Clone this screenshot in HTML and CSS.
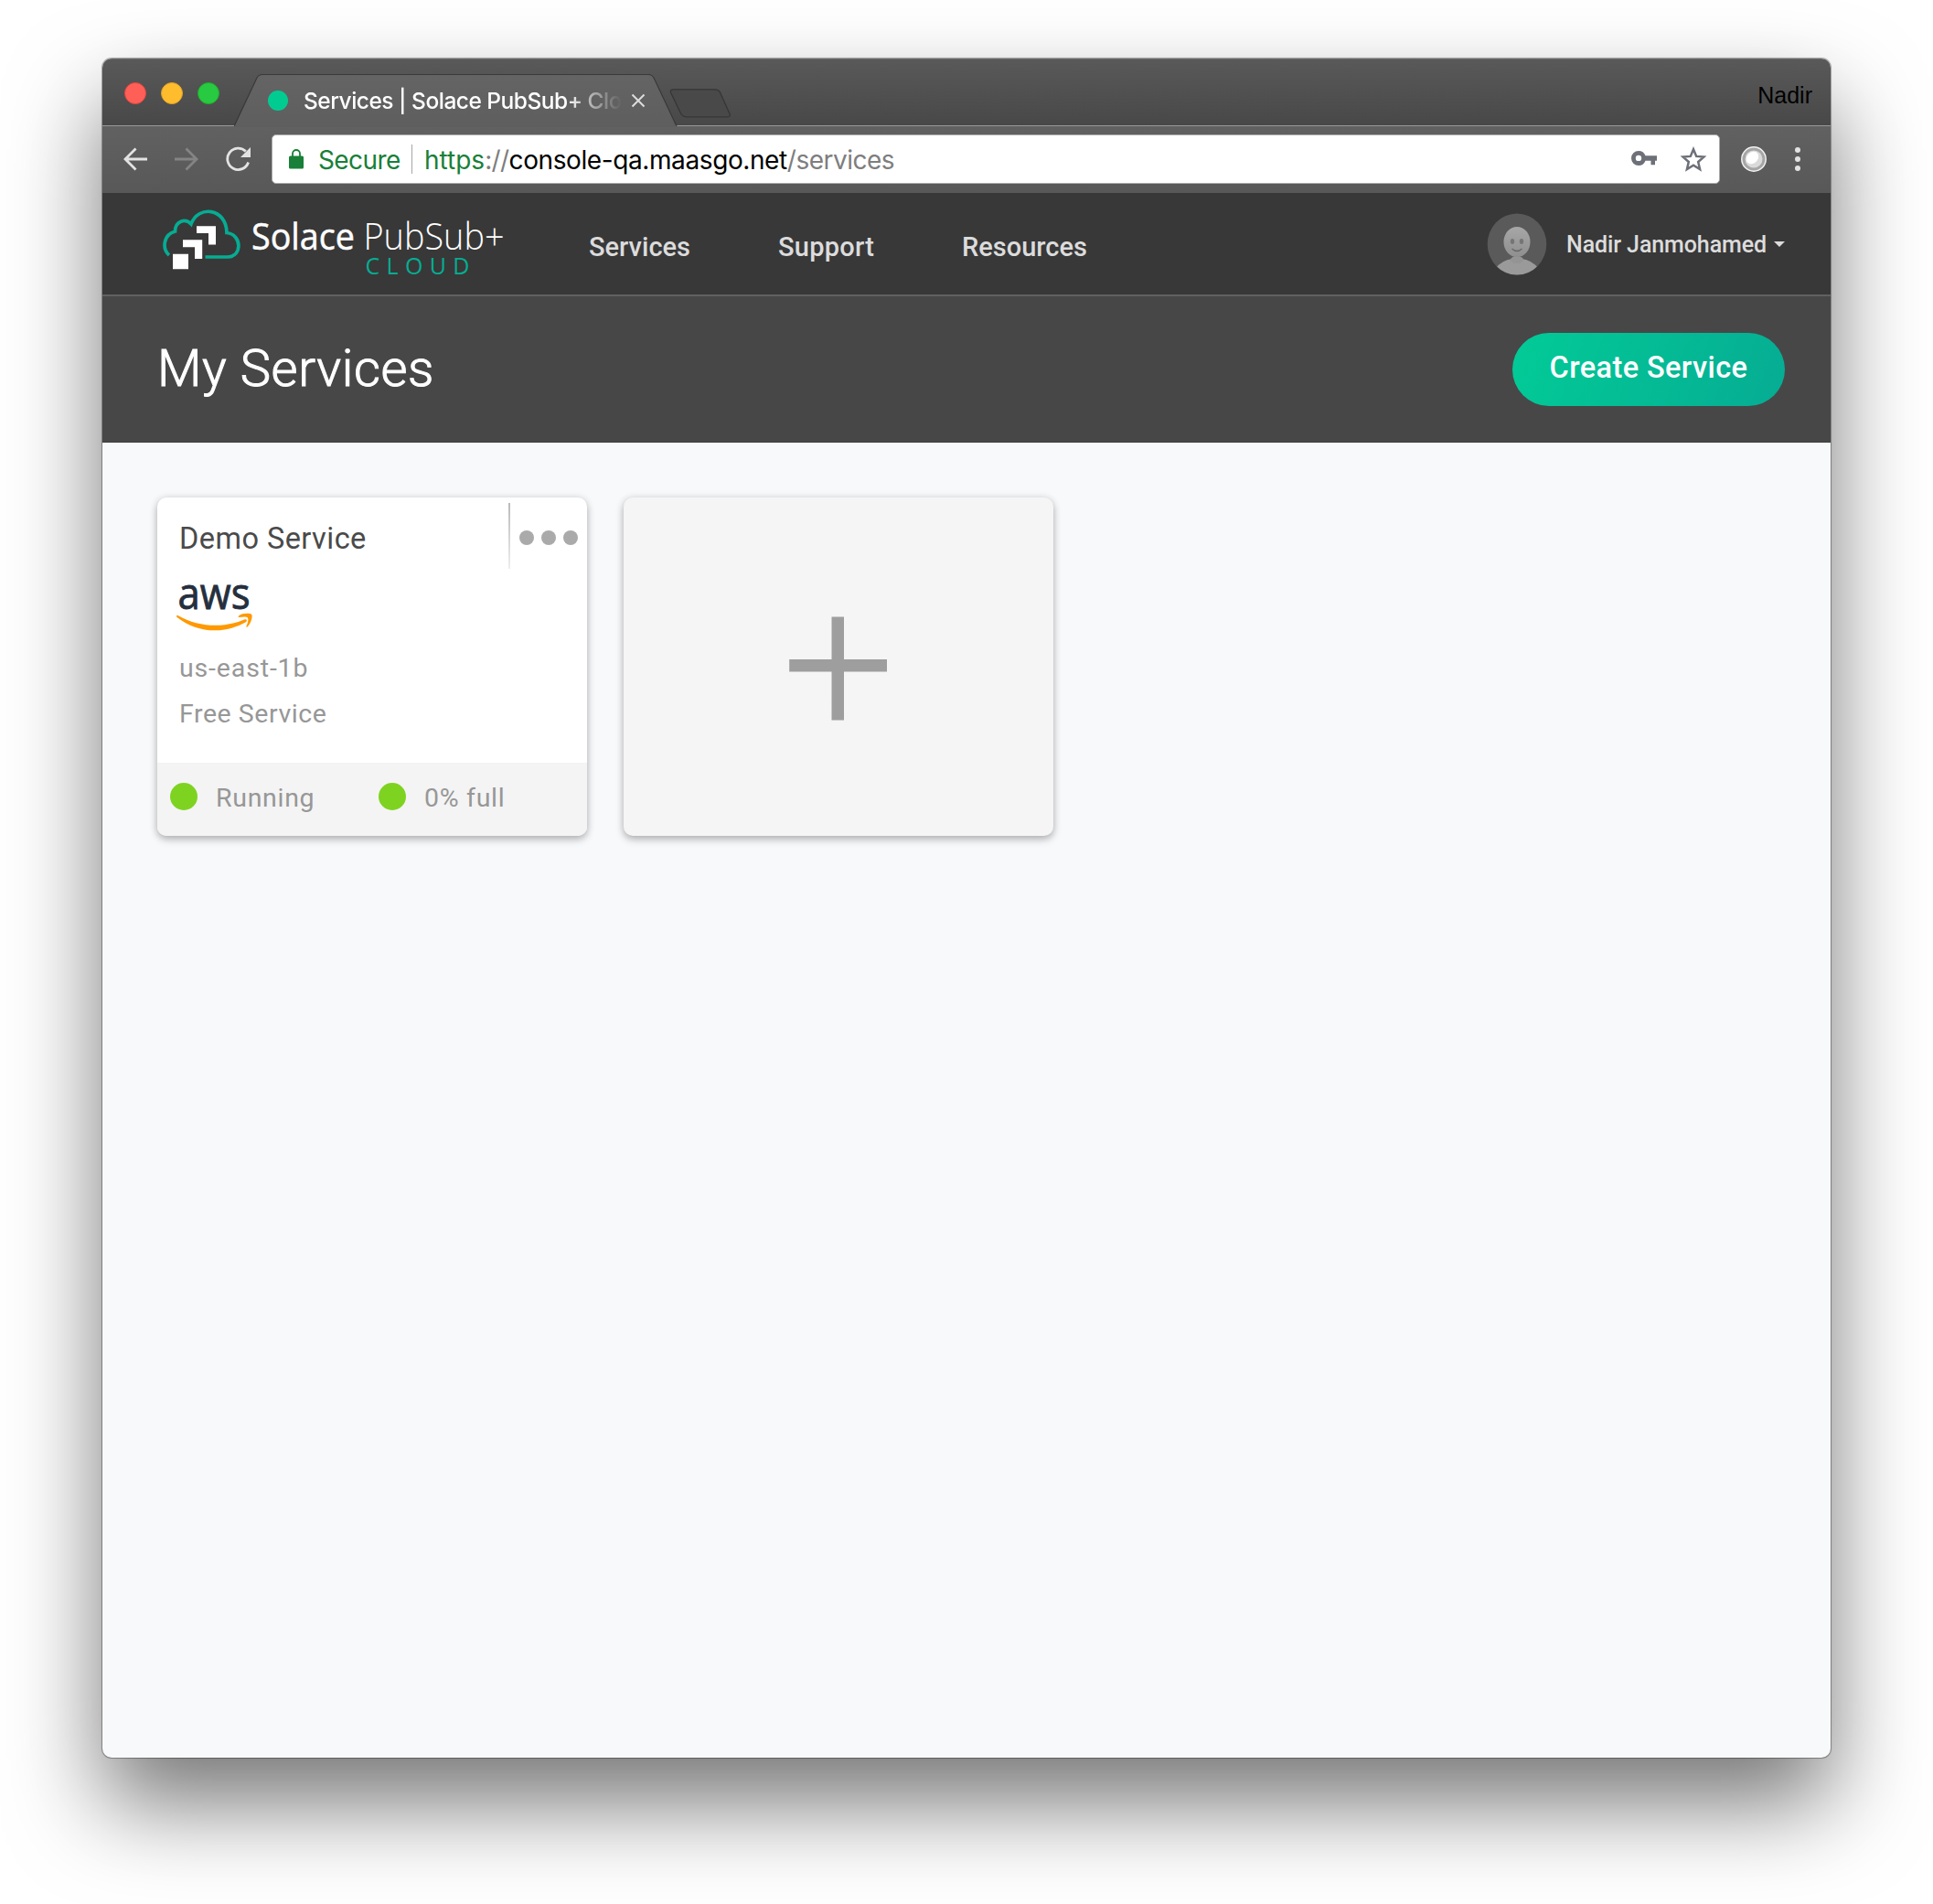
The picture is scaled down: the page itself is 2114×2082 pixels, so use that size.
FILE: index.html
```html
<!DOCTYPE html>
<html lang="en">
<head>
<meta charset="utf-8">
<title>Services | Solace PubSub+ Cloud</title>
<link rel="stylesheet" href="styles.css">
</head>
<body>
<div class="window">
  <div class="tabstrip">
    <div class="lights"><i class="light red"></i><i class="light yellow"></i><i class="light green"></i></div>
    <div class="tab">
      <svg class="tab-shape" width="486" height="58" viewBox="0 0 486 58">
        <path d="M0 58 L25 4 Q27 .5 31 .5 H453 Q457 .5 459 4 L484 58Z" fill="url(#tabfill)"/>
        <path d="M0 57 L25 4 Q27 .5 31 .5 H453 Q457 .5 459 4 L484 57" fill="none" stroke="#393939" stroke-width="1.2"/>
        <defs><linearGradient id="tabfill" x2="0" y2="1"><stop stop-color="#646464"/><stop offset="1" stop-color="#5e5e5e"/></linearGradient></defs>
      </svg>
      <i class="favicon"></i>
      <span class="tab-title">Services | Solace PubSub+ Cloud</span>
      <svg class="tab-close" width="16" height="16" viewBox="0 0 16 16"><path d="M1.500 1.500 L14.500 14.500 M14.500 1.500 L1.500 14.500" stroke="#dcdcdc" stroke-width="2"/></svg>
    </div>
    <svg class="new-tab" width="68" height="32" viewBox="0 0 68 32"><path d="M4.500 .8 H50 Q54 .8 55.500 4 L66 27.500 Q67 30.800 64 30.800 H19 Q14.500 30.800 12.500 27 L1.500 4 Q.6 .8 4.500 .8Z" fill="#494949" stroke="#363636" stroke-width="1.3"/></svg>
    <span class="profile">Nadir</span>
  </div>
  <div class="toolbar">
    <svg class="back" width="26" height="26" viewBox="0 0 26 26"><path d="M13.500 1.500 L2 13 L13.500 24.500 M2 13 H26" fill="none" stroke="#e3e3e3" stroke-width="2.800"/></svg>
    <svg class="forward" width="26" height="26" viewBox="0 0 26 26"><path d="M12.500 1.500 L24 13 L12.500 24.500 M24 13 H0" fill="none" stroke="#848484" stroke-width="2.800"/></svg>
    <svg class="reload" width="28" height="28" viewBox="0 0 28 28"><path d="M21.800 5.600 A11.700 11.700 0 1 0 24.600 17.500" fill="none" stroke="#e3e3e3" stroke-width="2.800"/><path d="M27 1 V12 H16Z" fill="#e3e3e3"/></svg>
    <div class="omnibox">
      <svg class="lock" width="16" height="22" viewBox="0 0 16 22"><rect y="7.500" width="16" height="14" rx="1.500" fill="#188038"/><path d="M4 9 V5 a4 4 0 0 1 8 0 V9" fill="none" stroke="#188038" stroke-width="1.800"/></svg>
      <span class="secure">Secure</span>
      <i class="sep"></i>
      <span class="url"><span class="scheme">https</span><span class="dim colon">://</span><span class="host">console-qa.maasgo.net</span><span class="dim path">/services</span></span>
      <svg class="key" width="28" height="16" viewBox="0 0 28 16"><path fill="#6d7078" fill-rule="evenodd" d="M8 0 a8 8 0 1 0 0 16 a8 8 0 0 0 7.500 -5.200 H21.500 V15.200 H26 V10.800 H28 V5.200 H15.500 A8 8 0 0 0 8 0Z M8 4.700 a3.200 3.200 0 1 1 0 6.400 a3.200 3.200 0 0 1 0 -6.400Z"/></svg>
      <svg class="star" width="30" height="29" viewBox="0 0 30 29"><path d="M15 3.200 L18.200 10.900 L26.400 11.600 L20.200 17 L22.100 25.100 L15 20.800 L7.900 25.100 L9.800 17 L3.600 11.600 L11.800 10.900Z" fill="none" stroke="#6d7078" stroke-width="2.500"/></svg>
    </div>
    <svg class="ext" width="28" height="28" viewBox="0 0 28 28"><circle cx="14" cy="14" r="13.200" fill="#a5a5a5" stroke="#f1f1f1" stroke-width="1.500"/><circle cx="14" cy="14" r="9.500" fill="#dadada"/><ellipse cx="12.500" cy="12.500" rx="7.500" ry="6" transform="rotate(-45 12.500 12.500)" fill="#fff"/></svg>
    <svg class="menu" width="6" height="26" viewBox="0 0 6 26"><g fill="#e3e3e3"><circle cx="3" cy="3" r="3"/><circle cx="3" cy="13" r="3"/><circle cx="3" cy="23" r="3"/></g></svg>
  </div>
  <header class="header">
    <svg class="logo" width="380" height="94" viewBox="0 0 380 94">
      <g fill="none" stroke="#06ac93" stroke-width="3.700"><path d="M8 52 C0 45 1.500 29.500 14.500 26 C14.500 15 25.500 11 32 18 C39.500 -3 70.500 0 71 27.500 C88 29.500 88 54 72 54 H47.500"/></g>
      <path fill="#fff" d="M38 20.200 H59 V40.500 H51 V28 H38Z M23 35.300 H44.200 V56 H36 V43.200 H23Z M12 50.800 H29 V67.200 H12Z"/>
      <text x="98" y="45.500" class="logo-name" textLength="113" lengthAdjust="spacingAndGlyphs">Solace</text>
      <text x="220.500" y="45.500" class="logo-light" textLength="154" lengthAdjust="spacingAndGlyphs">PubSub+</text>
      <text x="222.500" y="72.500" class="logo-cloud" textLength="114">CLOUD</text>
    </svg>
    <nav class="nav"><a>Services</a><a class="support">Support</a><a>Resources</a></nav>
    <div class="account">
      <svg width="66" height="68" viewBox="0 0 66 68"><defs><clipPath id="av"><ellipse cx="33" cy="34" rx="32.300" ry="33.500"/></clipPath><linearGradient id="face" x2="0" y2="1"><stop stop-color="#a7a7a7"/><stop offset="1" stop-color="#8f8f8f"/></linearGradient></defs>
        <g clip-path="url(#av)"><rect width="66" height="68" fill="#5a5a5a"/><ellipse cx="33" cy="73" rx="28" ry="23.500" fill="#9a9a9a"/><ellipse cx="33" cy="51" rx="7" ry="4" fill="#949494"/><ellipse cx="33" cy="31.500" rx="14.500" ry="16.500" fill="url(#face)"/></g>
        <g fill="#757575"><ellipse cx="28" cy="31" rx="2.200" ry="3"/><ellipse cx="38" cy="31" rx="2.200" ry="3"/></g><path d="M27.500 39 Q33 44 38.500 39" fill="none" stroke="#666" stroke-width="1.200"/></svg>
      <span class="account-name">Nadir Janmohamed</span>
      <i class="caret"></i>
    </div>
  </header>
  <div class="titlebar">
    <h1>My Services</h1>
    <button class="create">Create Service</button>
  </div>
  <main class="content">
    <section class="card">
      <div class="card-head"><h2>Demo Service</h2><div class="more"><i></i><i></i><i></i></div></div>
      <div class="card-body">
        <svg class="aws" width="84" height="56" viewBox="0 0 84 56"><text x="1.500" y="29.500" class="aws-text" textLength="79" lengthAdjust="spacingAndGlyphs">aws</text>
          <path fill="#f90" d="M1.500 37 C24 50 52 51 74 41.500 C77 40.500 78 43 75.500 44.500 C51 58 22 56 .6 39 C-.5 37.500 .3 36.300 1.500 37Z"/><path fill="#f90" d="M68 37.500 C72 34 81 34.500 82.300 36 C83.500 38 81.500 46 77.500 49.500 C76.500 50 76 49.500 76.500 48.500 C78 45 79 41.500 78 39.500 C76.500 38 72.500 38.500 68.500 39 C67.500 39 67.300 38.200 68 37.500Z"/></svg>
        <p class="region">us-east-1b</p>
        <p class="plan">Free Service</p>
      </div>
      <div class="card-foot"><div class="status"><i class="dot"></i><span>Running</span></div><div class="status"><i class="dot"></i><span>0% full</span></div></div>
    </section>
    <section class="card add">
      <svg width="108" height="114" viewBox="0 0 108 114"><path fill="#9e9e9e" d="M46.500 .5 h13.500 v46.500 h47 v13.500 h-47 v53 h-13.500 v-53 h-46.300 v-13.500 h46.300z"/></svg>
    </section>
  </main>
</div>
</body>
</html>
```
FILE: styles.css
```css
* { box-sizing: border-box; }
body { margin: 0; background: #fff; height: 2082px; overflow: hidden; padding: 64px 112px 0; }
h1, h2, p { margin: 0; font-weight: 400; }
svg, i { display: block; flex: none; }
.window { width: 1890px; height: 1858px; border-radius: 10px; overflow: hidden; background: #f8f9fb; display: flex; flex-direction: column; font-family: Roboto, sans-serif; white-space: nowrap;
  box-shadow: 0 0 0 1px rgba(0,0,0,.28), 0 0 3px rgba(0,0,0,.12), 0 50px 100px rgba(0,0,0,.54); }

.tabstrip { height: 74px; flex: none; display: flex; align-items: flex-start; background: linear-gradient(#595959, #484848); border-top: 1px solid #6a6a6a; border-bottom: 1px solid #999; font-family: Inter, sans-serif; }
.lights { display: flex; gap: 16px; padding: 25px 0 0 24px; width: 144px; }
.light { width: 24px; height: 24px; border-radius: 50%; border: 1px solid; }
.red { background: #ff5f57; border-color: #e2463f; }
.yellow { background: #ffbd2e; border-color: #e0a028; }
.green { background: #28ca41; border-color: #1dad2b; }
.tab { position: relative; width: 486px; height: 58px; margin-top: 16px; display: flex; align-items: center; padding: 0 0 4px 37px; }
.tab-shape { position: absolute; left: 0; top: 0; }
.favicon { position: relative; width: 22px; height: 22px; border-radius: 50%; background: #00cc92; margin-top: 3px; }
.tab-title { position: relative; width: 348px; margin-left: 17px; margin-top: 3px; overflow: hidden; color: #fff; font-size: 24.500px; font-weight: 500; letter-spacing: -.5px; line-height: 32px; -webkit-mask-image: linear-gradient(90deg, #000 82%, transparent); mask-image: linear-gradient(90deg, #000 82%, transparent); }
.tab-close { position: relative; margin: 3px 0 0 10px; }
.new-tab { margin-top: 32px; margin-left: -10px; }
.profile { margin: 23px 20px 0 auto; font: 25px/32px "Liberation Sans", sans-serif; color: #000; }

.toolbar { height: 73px; flex: none; display: flex; align-items: center; background: linear-gradient(#616161, #585858); padding: 0 33px 2px 23px; }
.forward { margin-left: 30px; }
.reload { margin-left: 30px; }
.omnibox { width: 1584px; height: 54px; margin: 1px 0 0 22px; border-radius: 5px; background: #fff; border: 1px solid #a9a9a9; display: flex; align-items: center; padding: 0 13px 0 18px; font: 28px/40px Inter, sans-serif; }
.secure { margin: 1px 0 0 16px; color: #188038; width: 91px; letter-spacing: -.6px; }
.sep { width: 1px; height: 32px; background: #a5a5a5; margin: 0 13px 0 11px; }
.url { flex: 1; margin-top: 1px; }
.scheme { color: #188038; }
.dim { color: #7e7e7e; }
.colon { letter-spacing: -.6px; }
.host { color: #000; letter-spacing: -.4px; }
.path { letter-spacing: -.5px; }
.key { margin-bottom: 2px; }
.star { margin-left: 25px; }
.ext { margin-left: 23px; }
.menu { margin-left: 31px; }

.header { height: 113px; flex: none; background: #383838; border-bottom: 2px solid #616161; display: flex; align-items: flex-start; padding: 0 50px 0 65px; color: #dcdcdc; }
.logo { margin-top: 16px; }
.logo-name, .logo-light, .logo-cloud { font-family: "Open Sans", sans-serif; font-size: 41px; fill: #fff; }
.logo-name { stroke: #fff; stroke-width: .5; }
.logo-light { font-weight: 300; }
.logo-cloud { font-size: 25px; fill: #06ac93; }
.nav { display: flex; margin: 41px 0 0 87px; font-size: 29px; line-height: 36px; font-weight: 500; }
.nav a { width: 207px; }
.nav a + a { width: 201px; }
.nav .support { letter-spacing: .25px; }
.account { display: flex; align-items: center; margin: 22px 0 0 auto; }
.account-name { margin-left: 21px; font-size: 25px; font-weight: 500; letter-spacing: -.1px; }
.caret { margin-left: 8px; border: 6px solid transparent; border-top-color: #dcdcdc; border-bottom: 0; }

.titlebar { height: 160px; flex: none; background: #474747; border-bottom: 1px solid #3d3d3d; display: flex; align-items: center; justify-content: space-between; padding: 0 50px 0 60px; color: #fff; }
.titlebar h1 { font-size: 56px; font-weight: 300; line-height: 66px; letter-spacing: .65px; -webkit-text-stroke: 1px #fff; padding-bottom: 2px; }
.create { width: 298px; height: 80px; border: 0; border-radius: 40px; background: linear-gradient(110deg, #02cb97, #06ac93); color: #fff; font: 500 32.500px/40px Roboto, sans-serif; letter-spacing: .4px; padding: 0 0 3px; }

.content { display: flex; gap: 40px; padding: 60px; }
.card { width: 470px; height: 370px; flex: none; border-radius: 10px; background: #fff; overflow: hidden; display: flex; flex-direction: column; box-shadow: 0 4px 8px rgba(0,0,0,.25), 0 0 8px rgba(0,0,0,.1); }
.card-head { display: flex; justify-content: space-between; padding: 6px 8px 0 24px; height: 78px; }
.card-head h2 { font-size: 32.500px; line-height: 40px; color: #4a4a4a; margin-top: 19px; letter-spacing: .45px; }
.more { width: 78px; height: 72px; padding: 30px 0 0 12px; display: flex; gap: 8px; background: linear-gradient(#bababa, #eee) left / 2px 100% no-repeat; }
.more i { width: 16px; height: 16px; border-radius: 50%; background: #aaa; }
.card-body { flex: 1; padding: 14px 0 0 21px; }
.card-body p { margin-left: 3px; font-size: 28.500px; line-height: 50px; color: #979797; }
.card-body .region { margin-top: 14px; letter-spacing: .85px; }
.card-body .plan { letter-spacing: .55px; }
.aws-text { font: 47px "Open Sans", sans-serif; fill: #252f3e; stroke: #252f3e; stroke-width: .9; }
.card-foot { height: 80px; background: #f4f4f4; display: flex; align-items: center; padding: 0 14px; font-size: 28.500px; letter-spacing: .7px; color: #979797; }
.status { display: flex; align-items: center; width: 228px; gap: 20px; flex: none; padding-bottom: 3px; }
.dot { width: 30px; height: 30px; border-radius: 50%; background: #7ed321; margin-bottom: 3px; }
.add { background: #f5f5f5; align-items: center; justify-content: center; padding: 3px 0 0; }
```
